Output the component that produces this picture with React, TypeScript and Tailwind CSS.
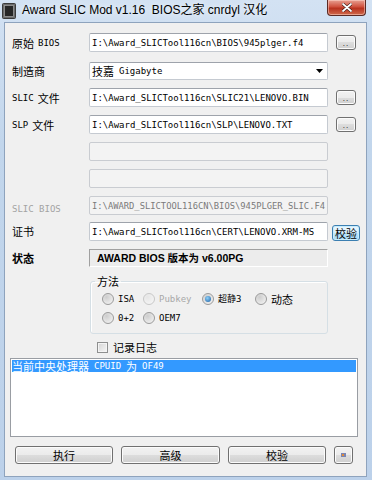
import React from "react"

const CJK = "font-['Noto_Sans_CJK_SC',sans-serif] text-[11px] leading-[12px]"
const MONO = "font-['DejaVu_Sans_Mono','Noto_Sans_CJK_SC',monospace] text-[9px] leading-[12px]"

const BTN =
  "border border-[#707070] rounded-[3px] bg-[linear-gradient(#f2f2f2,#ebebeb_50%,#dddddd_50%,#cfcfcf)] shadow-[inset_0_0_0_1px_#fbfbfb] flex items-center justify-center text-black"

const EDIT = "h-[19px] w-[239px] rounded-[2px] border border-[#c5cad1] border-t-[#9ea3ab] bg-white flex items-center pl-[2px] overflow-hidden"
const EDIT_OFF = "h-[19px] w-[239px] rounded-[2px] border border-[#c9ccd1] bg-[#f3f3f3] flex items-center pl-[2px] overflow-hidden"

function Label({ cjk, lat, cjkFirst = true, muted = false, bold = false }: { cjk?: string; lat?: string; cjkFirst?: boolean; muted?: boolean; bold?: boolean }) {
  const color = muted ? "text-[#9b9b9b]" : "text-black"
  const c = cjk ? <span className={`${CJK} ${bold ? "font-bold" : ""}`}>{cjk}</span> : null
  const l = lat ? <span className={MONO}>{lat}</span> : null
  return (
    <div className={`w-[77px] flex items-center gap-[4px] ${color}`}>
      {cjkFirst ? c : l}
      {cjkFirst ? l : c}
    </div>
  )
}

function Dots() {
  return (
    <div className={`${BTN} ml-[8px] w-[20px] h-[15px]`}>
      <span className="font-['Liberation_Sans',sans-serif] text-[8px] leading-[8px] tracking-[1px] mt-[3px]">..</span>
    </div>
  )
}

function Radio({ label, checked = false, disabled = false, mono = true, w }: { label: string; checked?: boolean; disabled?: boolean; mono?: boolean; w: string }) {
  return (
    <div className={`flex items-center gap-[4px] ${w}`}>
      <span
        className={`w-[12px] h-[12px] rounded-full border flex items-center justify-center ${
          disabled
            ? "border-[#c8c8c8] bg-[radial-gradient(circle_at_35%_30%,#e6e6e6,#f8f8f8)]"
            : "border-[#9a9a9a] bg-[radial-gradient(circle_at_35%_30%,#cdcdcd,#f7f7f7)]"
        }`}
      >
        {checked && <span className="w-[6px] h-[6px] rounded-full bg-[radial-gradient(circle_at_40%_35%,#8fd0f8,#1a5fa5)]" />}
      </span>
      <span className={`${mono ? MONO : CJK} ${disabled ? "text-[#a8a8a8]" : "text-black"}`}>{label}</span>
    </div>
  )
}

export default function App() {
  return (
    <div className="w-[372px] h-[480px] flex flex-col overflow-hidden bg-[linear-gradient(180deg,#d3e2f3,#c2d6ec_30%,#bcd1ea)]">
      {/* Title bar */}
      <div className="h-[22px] flex items-start shrink-0">
        <svg width="14" height="16" viewBox="0 0 14 16" className="ml-[2px] mt-[3px]">
          <rect x="0.5" y="0.5" width="13" height="15" rx="1" fill="#6b6b6b" stroke="#3a3a3a" />
          <rect x="2.5" y="2.5" width="9" height="11" fill="#262626" stroke="#9c9c9c" strokeWidth="0.8" />
        </svg>
        <span className="ml-[6px] mt-[3px] whitespace-pre font-['Liberation_Sans','Noto_Sans_CJK_SC',sans-serif] text-[12px] leading-[15px] text-black [text-shadow:0_0_6px_#ffffff]">
          Award SLIC Mod v1.16  BIOS之家 cnrdyl 汉化
        </span>
        <div className="ml-auto mr-[6px] w-[39px] h-[16px] rounded-b-[4px] border border-t-0 border-[#5b2a24] bg-[linear-gradient(#e8a193,#d0513e_45%,#b8321f_55%,#cf6a4c)] shadow-[inset_0_0_0_1px_rgba(255,220,210,0.5)] flex items-center justify-center">
          <svg width="10" height="9" viewBox="0 0 10 9">
            <path d="M1 1 L9 8 M9 1 L1 8" stroke="#3b1a15" strokeWidth="3" strokeLinecap="round" />
            <path d="M1 1 L9 8 M9 1 L1 8" stroke="#ffffff" strokeWidth="1.8" strokeLinecap="round" />
          </svg>
        </div>
      </div>

      {/* Client area */}
      <div className="ml-[4px] mr-[5px] mb-[3px] flex-1 bg-[#f0f0f0] border border-[#8ea3bd] flex flex-col pl-[7px]">
        <div className="mt-[10px] h-[19px] flex items-center">
          <Label cjk="原始" lat="BIOS" />
          <div className={EDIT}>
            <span className={`${MONO} whitespace-nowrap`}>I:\Award_SLICTool116cn\BIOS\945plger.f4</span>
          </div>
          <Dots />
        </div>

        <div className="mt-[10px] h-[18px] flex items-center">
          <Label cjk="制造商" />
          <div className="h-[18px] w-[239px] rounded-[2px] border border-[#c5cad1] border-t-[#9ea3ab] bg-white flex items-center pl-[2px] pr-[4px]">
            <span className={CJK}>技嘉</span>
            <span className={`${MONO} ml-[5px]`}>Gigabyte</span>
            <svg width="7" height="4" viewBox="0 0 7 4" className="ml-auto">
              <path d="M0 0 H7 L3.5 4 Z" fill="#000" />
            </svg>
          </div>
        </div>

        <div className="mt-[8px] h-[19px] flex items-center">
          <Label cjk="文件" lat="SLIC" cjkFirst={false} />
          <div className={EDIT}>
            <span className={`${MONO} whitespace-nowrap`}>I:\Award_SLICTool116cn\SLIC21\LENOVO.BIN</span>
          </div>
          <Dots />
        </div>

        <div className="mt-[8px] h-[19px] flex items-center">
          <Label cjk="文件" lat="SLP" cjkFirst={false} />
          <div className={EDIT}>
            <span className={`${MONO} whitespace-nowrap`}>I:\Award_SLICTool116cn\SLP\LENOVO.TXT</span>
          </div>
          <Dots />
        </div>

        <div className="mt-[8px] h-[19px] flex items-center">
          <Label />
          <div className={EDIT_OFF} />
        </div>

        <div className="mt-[8px] h-[19px] flex items-center">
          <Label />
          <div className={EDIT_OFF} />
        </div>

        <div className="mt-[8px] h-[19px] flex items-center">
          <div className="w-[77px] text-[#a3a3a3]">
            <span className={MONO}>SLIC BIOS</span>
          </div>
          <div className={EDIT_OFF}>
            <span className="font-['DejaVu_Sans_Mono',monospace] text-[8.8px] leading-[12px] whitespace-nowrap text-[#7a7a7a]">
              I:\AWARD_SLICTOOL116CN\BIOS\945PLGER_SLIC.F4
            </span>
          </div>
        </div>

        <div className="mt-[7px] h-[19px] flex items-center">
          <div className="w-[77px] -mt-[4px]">
            <span className={CJK}>证书</span>
          </div>
          <div className={EDIT}>
            <span className={`${MONO} whitespace-nowrap`}>I:\Award_SLICTool116cn\CERT\LENOVO.XRM-MS</span>
          </div>
          <div className="ml-[4px] w-[28px] h-[16px] mt-[2px] rounded-[3px] border border-[#3c7fb1] bg-[linear-gradient(#eaf6fd,#d9f0fc_50%,#bee6fd_50%,#a7d9f5)] shadow-[inset_0_0_0_1px_#c7ecfd] flex items-center justify-center">
            <span className={CJK}>校验</span>
          </div>
        </div>

        <div className="mt-[8px] h-[18px] flex items-center">
          <div className="w-[77px] -mt-[2px]">
            <span className={`${CJK} font-bold`}>状态</span>
          </div>
          <div className="h-[18px] w-[239px] border border-[#a0a0a0] border-r-white border-b-white bg-[#ececec] flex items-center pl-[7px]">
            <span className="font-['Liberation_Sans','Noto_Sans_CJK_SC',sans-serif] text-[10.5px] leading-[12px] font-bold text-black">
              AWARD BIOS 版本为 v6.00PG
            </span>
          </div>
        </div>

        <fieldset className="mt-[8px] ml-[78px] w-[238px] rounded-[3px] border border-[#d5dfe5] shadow-[inset_1px_1px_0_#ffffff] pl-[11px] pt-[5px] pb-[8px]">
          <legend className={`${CJK} -ml-[7px] px-[2px] text-black`}>方法</legend>
          <div className="flex items-center h-[14px]">
            <Radio label="ISA" w="w-[41px]" />
            <Radio label="Pubkey" disabled w="w-[59px]" />
            <Radio label="超静3" checked w="w-[53px]" />
            <Radio label="动态" mono={false} w="w-[50px]" />
          </div>
          <div className="flex items-center h-[14px] mt-[5px]">
            <Radio label="0+2" w="w-[41px]" />
            <Radio label="OEM7" w="w-[59px]" />
          </div>
        </fieldset>

        <div className="mt-[7px] ml-[85px] h-[12px] flex items-center gap-[5px]">
          <span className="w-[11px] h-[11px] border border-[#8e8f8f] bg-[linear-gradient(135deg,#d4d4d4,#f6f6f6)] shadow-[inset_0_0_0_1px_#f4f4f4]" />
          <span className={CJK}>记录日志</span>
        </div>

        <div className="mt-[5px] -ml-[2px] w-[348px] h-[79px] border border-[#999da3] bg-white p-[1px]">
          <div className="h-[12px] bg-[#3399ff] text-white flex items-center whitespace-nowrap">
            <span className={CJK}>当前中央处理器</span>
            <span className={`${MONO} ml-[5px]`}>CPUID</span>
            <span className={`${CJK} ml-[5px]`}>为</span>
            <span className={`${MONO} ml-[5px]`}>OF49</span>
          </div>
        </div>

        <div className="mt-[9px] flex items-center gap-[8px] ml-[3px]">
          <div className={`${BTN} w-[98px] h-[18px]`}>
            <span className={CJK}>执行</span>
          </div>
          <div className={`${BTN} w-[99px] h-[18px]`}>
            <span className={CJK}>高级</span>
          </div>
          <div className={`${BTN} w-[98px] h-[18px]`}>
            <span className={CJK}>校验</span>
          </div>
          <div className={`${BTN} w-[19px] h-[18px]`}>
            <svg width="5" height="4" viewBox="0 0 5 4">
              <rect x="0" y="0" width="5" height="4" fill="#7a86b4" />
              <rect x="1" y="1" width="2" height="2" fill="#e08a3a" />
            </svg>
          </div>
        </div>
      </div>
    </div>
  )
}
